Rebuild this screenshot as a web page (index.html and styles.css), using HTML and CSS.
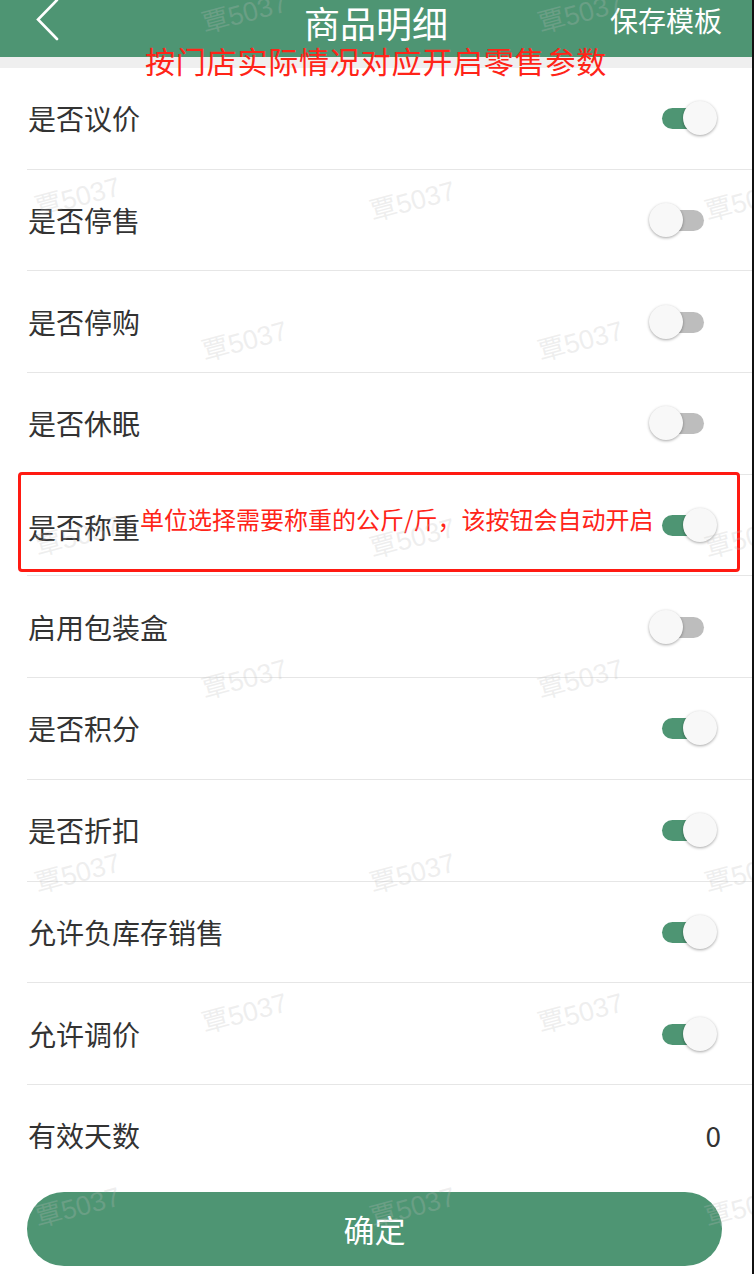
FILE: index.html
```html
<!DOCTYPE html>
<html>
<head>
    <meta charset="utf-8">
    <title>商品明细</title>
    <link rel="stylesheet" href="styles.css">
</head>
<body>
<div class="page">
    <div class="header">
        <div class="back">
            <svg width="24" height="42" viewBox="0 0 24 42">
                <polyline points="21,1 2,20.5 21,40" fill="none" stroke="#fff" stroke-width="2.6" stroke-linecap="round" stroke-linejoin="miter"/>
            </svg>
        </div>
        <div class="title">商品明细</div>
        <div class="save">保存模板</div>
    </div>
    <div class="band"></div>
    <div class="note-top">按门店实际情况对应开启零售参数</div>

    <div class="list">
        <div class="row"><span class="label">是否议价</span><span class="switch on"><i></i></span></div>
        <div class="row"><span class="label">是否停售</span><span class="switch"><i></i></span></div>
        <div class="row"><span class="label">是否停购</span><span class="switch"><i></i></span></div>
        <div class="row"><span class="label">是否休眠</span><span class="switch"><i></i></span></div>
        <div class="row marked">
            <span class="label">是否称重</span>
            <span class="note-row">单位选择需要称重的公斤/斤，该按钮会自动开启</span>
            <span class="switch on"><i></i></span>
            <span class="red-box"></span>
        </div>
        <div class="row"><span class="label">启用包装盒</span><span class="switch"><i></i></span></div>
        <div class="row"><span class="label">是否积分</span><span class="switch on"><i></i></span></div>
        <div class="row"><span class="label">是否折扣</span><span class="switch on"><i></i></span></div>
        <div class="row"><span class="label">允许负库存销售</span><span class="switch on"><i></i></span></div>
        <div class="row"><span class="label">允许调价</span><span class="switch on"><i></i></span></div>
        <div class="row last"><span class="label">有效天数</span><span class="value">0</span></div>
    </div>

    <div class="footer">
        <button class="confirm">确定</button>
    </div>

    <div class="marks" id="marks"></div>
</div>

<script>
    // 水印位置
    var marks = [
        [207, 2], [543, 2],
        [40, 186], [375, 190], [710, 190],
        [207, 330], [543, 330],
        [40, 525], [375, 527], [710, 527],
        [207, 668], [543, 668],
        [40, 862], [375, 862], [710, 862],
        [207, 1002], [543, 1002],
        [40, 1196], [375, 1196], [710, 1196]
    ];
    var box = document.getElementById('marks');
    marks.forEach(function (m) {
        var s = document.createElement('span');
        s.className = 'mark';
        s.textContent = '覃5037';
        s.style.left = m[0] + 'px';
        s.style.top = m[1] + 'px';
        box.appendChild(s);
    });
</script>
</body>
</html>
```

FILE: styles.css
```css
body {
    margin: 0;
    background-color: #fff;
    font-family: "Noto Sans CJK SC", "Noto Sans", sans-serif;
}

.page {
    position: relative;
    width: 752px;
    height: 1274px;
    border-right: 2px solid #111;
    overflow: hidden;
    background-color: #fff;
}

.header {
    height: 57px;
    background-color: #4e9573;
    display: flex;
    align-items: center;
    color: #fff;
    position: relative;
}

.back {
    width: 36px;
    padding-left: 36px;
    height: 57px;
    display: flex;
    align-items: flex-start;
}

.back svg {
    display: block;
    margin-top: -1px;
}

.title {
    position: absolute;
    left: 0;
    right: 0;
    top: -6px;
    text-align: center;
    font-size: 36px;
    line-height: 56px;
}

.save {
    margin-left: auto;
    margin-right: 30px;
    margin-top: -18px;
    font-size: 28px;
    position: relative;
}

.band {
    height: 11px;
    background-color: #efefef;
}

.note-top {
    position: absolute;
    left: 0;
    right: 0;
    top: 40px;
    text-align: center;
    color: #ff2418;
    font-size: 30px;
    line-height: 40px;
    letter-spacing: 0.8px;
}

.list {
    display: flex;
    flex-direction: column;
}

.row {
    position: relative;
    height: 100.7px;
    margin-left: 27px;
    border-bottom: 1px solid #e6e6e6;
    display: flex;
    align-items: center;
    padding-right: 35px;
    white-space: nowrap;
}

.row.last {
    border-bottom: none;
    padding-right: 31px;
}

.label {
    font-size: 28px;
    color: #333;
    padding-left: 1px;
    flex-shrink: 0;
}

.value {
    margin-left: auto;
    font-size: 28px;
    color: #333;
}

.switch {
    margin-left: auto;
    position: relative;
    width: 68px;
    height: 34px;
    flex-shrink: 0;
}

.switch::before {
    content: "";
    position: absolute;
    left: 13px;
    top: 7px;
    width: 42px;
    height: 21px;
    border-radius: 11px;
    background-color: #bdbdbd;
}

.switch i {
    position: absolute;
    left: 0;
    top: 0;
    width: 34px;
    height: 34px;
    border-radius: 50%;
    background-color: #f8f8f8;
    box-shadow: 0 1px 3px rgba(0, 0, 0, 0.35);
}

.switch.on::before {
    background-color: #4e9573;
}

.switch.on i {
    left: 34px;
}

.row.marked .label {
    margin-top: 4px;
}

.note-row {
    color: #ff2418;
    font-size: 24px;
    margin-top: -14px;
    margin-right: -20px;
    flex-shrink: 0;
}

.red-box {
    position: absolute;
    left: -9px;
    top: -3px;
    width: 716px;
    height: 94px;
    border: 3px solid #ff1a12;
    border-radius: 4px;
}

.footer {
    padding: 6px 30px 0 27px;
}

.confirm {
    display: block;
    width: 100%;
    height: 74px;
    border: none;
    border-radius: 37px;
    background-color: #4e9573;
    color: #fff;
    font-family: "Noto Sans CJK SC", "Noto Sans", sans-serif;
    font-size: 31px;
}

.marks {
    position: absolute;
    left: 0;
    top: 0;
    right: 0;
    bottom: 0;
    pointer-events: none;
}

.mark {
    position: absolute;
    font-family: "Liberation Sans", "Noto Sans CJK SC", sans-serif;
    font-size: 27px;
    color: rgba(190, 190, 190, 0.25);
    transform: rotate(-15deg);
    transform-origin: left bottom;
    white-space: nowrap;
}
```
